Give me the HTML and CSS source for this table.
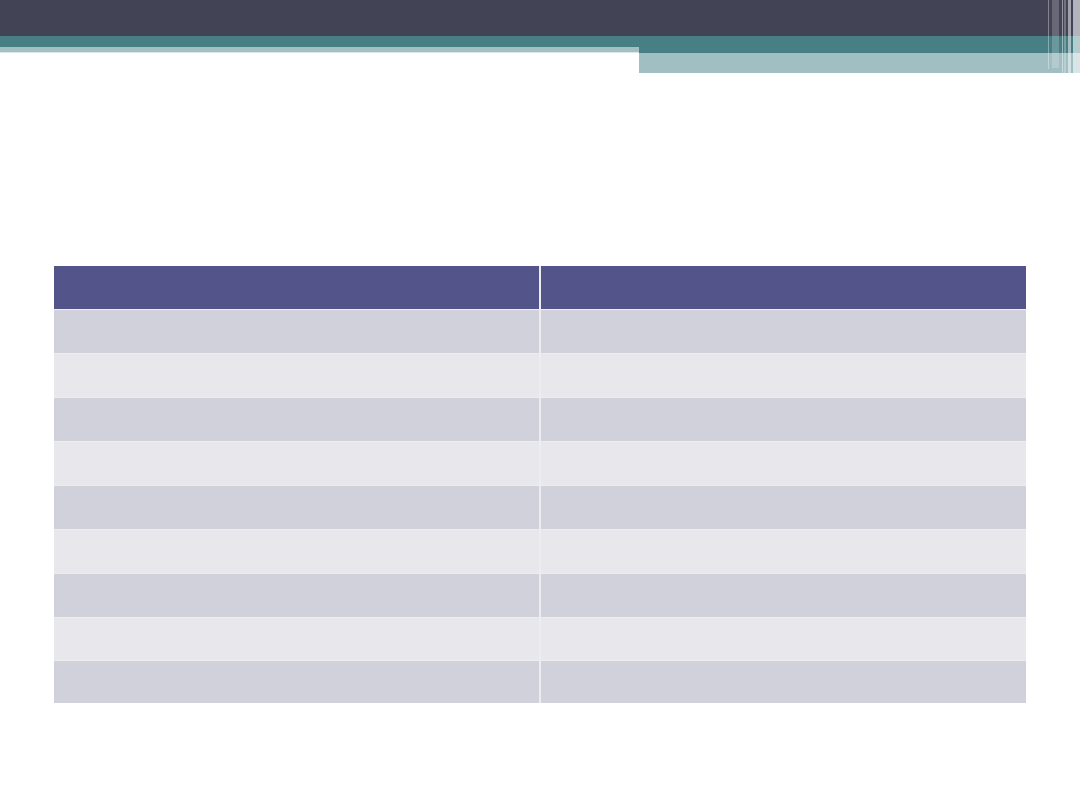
FILE: index.html
```html
<!DOCTYPE html>
<html>
<head>
<meta charset="utf-8">
<link rel="stylesheet" href="styles.css">
</head>
<body>
<header class="banner">
  <div class="topbar"></div>
  <div class="band">
    <div class="band-left">
      <div class="teal-short"></div>
      <div class="light-strip"></div>
      <div class="pale-line"></div>
    </div>
    <div class="band-right">
      <div class="teal-tall"></div>
      <div class="light-block"></div>
    </div>
  </div>
  <div class="stripes">
    <span class="s s1"></span>
    <span class="s s2"></span>
    <span class="s s3"></span>
    <span class="s s4"></span>
    <span class="s s5"></span>
    <span class="s s6"></span>
  </div>
</header>
<main class="content">
  <div class="table">
    <div class="cell head"></div><div class="cell head"></div>
    <div class="cell odd"></div><div class="cell odd"></div>
    <div class="cell even"></div><div class="cell even"></div>
    <div class="cell odd"></div><div class="cell odd"></div>
    <div class="cell even"></div><div class="cell even"></div>
    <div class="cell odd"></div><div class="cell odd"></div>
    <div class="cell even"></div><div class="cell even"></div>
    <div class="cell odd"></div><div class="cell odd"></div>
    <div class="cell even"></div><div class="cell even"></div>
    <div class="cell odd"></div><div class="cell odd"></div>
  </div>
</main>
</body>
</html>
```
FILE: styles.css
```css
html, body {
  margin: 0;
  padding: 0;
  background: #ffffff;
  font-family: "Liberation Sans", Arial, sans-serif;
}
.banner {
  position: relative;
  height: 73px;
}
.topbar {
  height: 36px;
  background: #434356;
}
.band {
  display: flex;
  align-items: flex-start;
}
.band-left {
  width: 639px;
}
.teal-short {
  height: 11px;
  background: #477f84;
}
.light-strip {
  height: 5px;
  background: #a2bfc3;
}
.pale-line {
  height: 1px;
  background: #dbe7e8;
}
.band-right {
  flex: 1;
}
.teal-tall {
  height: 17px;
  background: #477f84;
}
.light-block {
  height: 20px;
  background: #a1bec2;
}
.stripes {
  position: absolute;
  top: 0;
  right: 0;
  width: 32px;
  height: 73px;
}
.s {
  position: absolute;
  top: 0;
  display: block;
}
.s1 { left: 0; width: 1px; height: 69px; background: rgba(255,255,255,0.35); }
.s2 { left: 4px; width: 7px; height: 68px; background: rgba(255,255,255,0.2); }
.s3 { left: 14px; width: 1px; height: 73px; background: rgba(255,255,255,0.45); }
.s4 { left: 16px; width: 2px; height: 73px; background: rgba(255,255,255,0.25); }
.s5 { left: 20px; width: 3px; height: 73px; background: rgba(255,255,255,0.5); }
.s6 { left: 25px; width: 7px; height: 73px; background: rgba(255,255,255,0.6); }
.content {
  padding: 193px 54px 0 54px;
}
.table {
  display: grid;
  grid-template-columns: 485px 485px;
  grid-template-rows: 43px 43px 43px 43px 43px 43px 43px 43px 42px 42px;
  column-gap: 2px;
  row-gap: 1px;
  background: #ececf1;
  width: 972px;
}
.cell.head { background: #53548a; }
.cell.odd { background: #d1d1db; }
.cell.even { background: #e8e7ec; }
```
